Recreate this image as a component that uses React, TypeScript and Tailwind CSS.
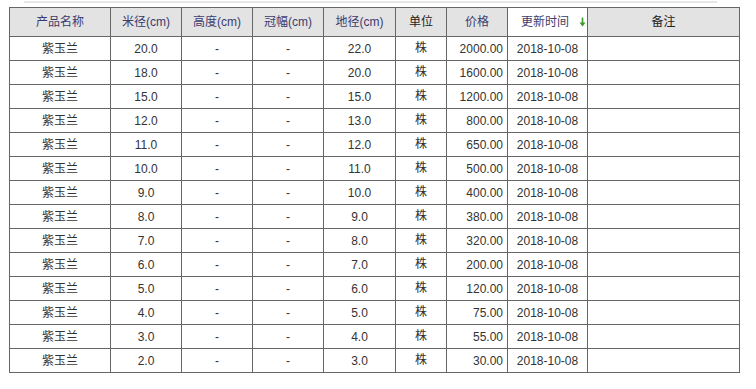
const rows: [string, string, string][] = [
  ["20.0", "22.0", "2000.00"],
  ["18.0", "20.0", "1600.00"],
  ["15.0", "15.0", "1200.00"],
  ["12.0", "13.0", "800.00"],
  ["11.0", "12.0", "650.00"],
  ["10.0", "11.0", "500.00"],
  ["9.0", "10.0", "400.00"],
  ["8.0", "9.0", "380.00"],
  ["7.0", "8.0", "320.00"],
  ["6.0", "7.0", "200.00"],
  ["5.0", "6.0", "120.00"],
  ["4.0", "5.0", "75.00"],
  ["3.0", "4.0", "55.00"],
  ["2.0", "3.0", "30.00"],
];

const th = "border border-[#666] bg-[#e3e3e3] font-normal text-center h-[29px] p-0";
const td = "border border-[#666] text-center h-[24px] p-0";

export default function App() {
  return (
    <div
      className="w-[756px] h-[389px] bg-white text-[12px] text-[#333]"
      style={{ fontFamily: '"Liberation Sans", "Noto Sans CJK SC", sans-serif' }}
    >
      <div className="ml-[24px] w-[693px] h-[2px] mt-px bg-[#e6e6e6]" />
      <table className="ml-[9px] mt-[4px] border-collapse table-fixed w-[730px]">
        <colgroup>
          <col className="w-[101px]" />
          <col className="w-[71px]" />
          <col className="w-[71px]" />
          <col className="w-[71px]" />
          <col className="w-[72px]" />
          <col className="w-[51px]" />
          <col className="w-[61px]" />
          <col className="w-[80px]" />
          <col className="w-[152px]" />
        </colgroup>
        <thead>
          <tr>
            <th className={`${th} text-[#3c3c6e]`}>产品名称</th>
            <th className={`${th} text-[#3c3c6e]`}>米径(cm)</th>
            <th className={`${th} text-[#3c3c6e]`}>高度(cm)</th>
            <th className={`${th} text-[#3c3c6e]`}>冠幅(cm)</th>
            <th className={`${th} text-[#3c3c6e]`}>地径(cm)</th>
            <th className={`${th} text-[#222]`}>单位</th>
            <th className={`${th} text-[#3c3c6e]`}>价格</th>
            <th className="border border-[#666] bg-white font-normal h-[29px] p-0 text-[#3c3c6e]">
              <div className="flex items-center justify-center gap-[10px] pl-[12px]">
                <span>更新时间</span>
                <svg width="7" height="10" viewBox="0 0 7 10">
                  <path d="M3.5 0.5 V8" stroke="#3a9a2a" strokeWidth="1.6" />
                  <path d="M0.5 5.5 L3.5 9.5 L6.5 5.5 Z" fill="#3a9a2a" />
                </svg>
              </div>
            </th>
            <th className={`${th} text-[#222]`}>备注</th>
          </tr>
        </thead>
        <tbody>
          {rows.map(([mi, di, price], i) => (
            <tr key={i}>
              <td className={td}>紫玉兰</td>
              <td className={td}>{mi}</td>
              <td className={td}>-</td>
              <td className={td}>-</td>
              <td className={td}>{di}</td>
              <td className={`${td} align-top pt-[2px]`}>株</td>
              <td className="border border-[#666] text-right pr-[4px] h-[24px] py-0">{price}</td>
              <td className={td}>2018-10-08</td>
              <td className={td}></td>
            </tr>
          ))}
        </tbody>
      </table>
    </div>
  );
}
